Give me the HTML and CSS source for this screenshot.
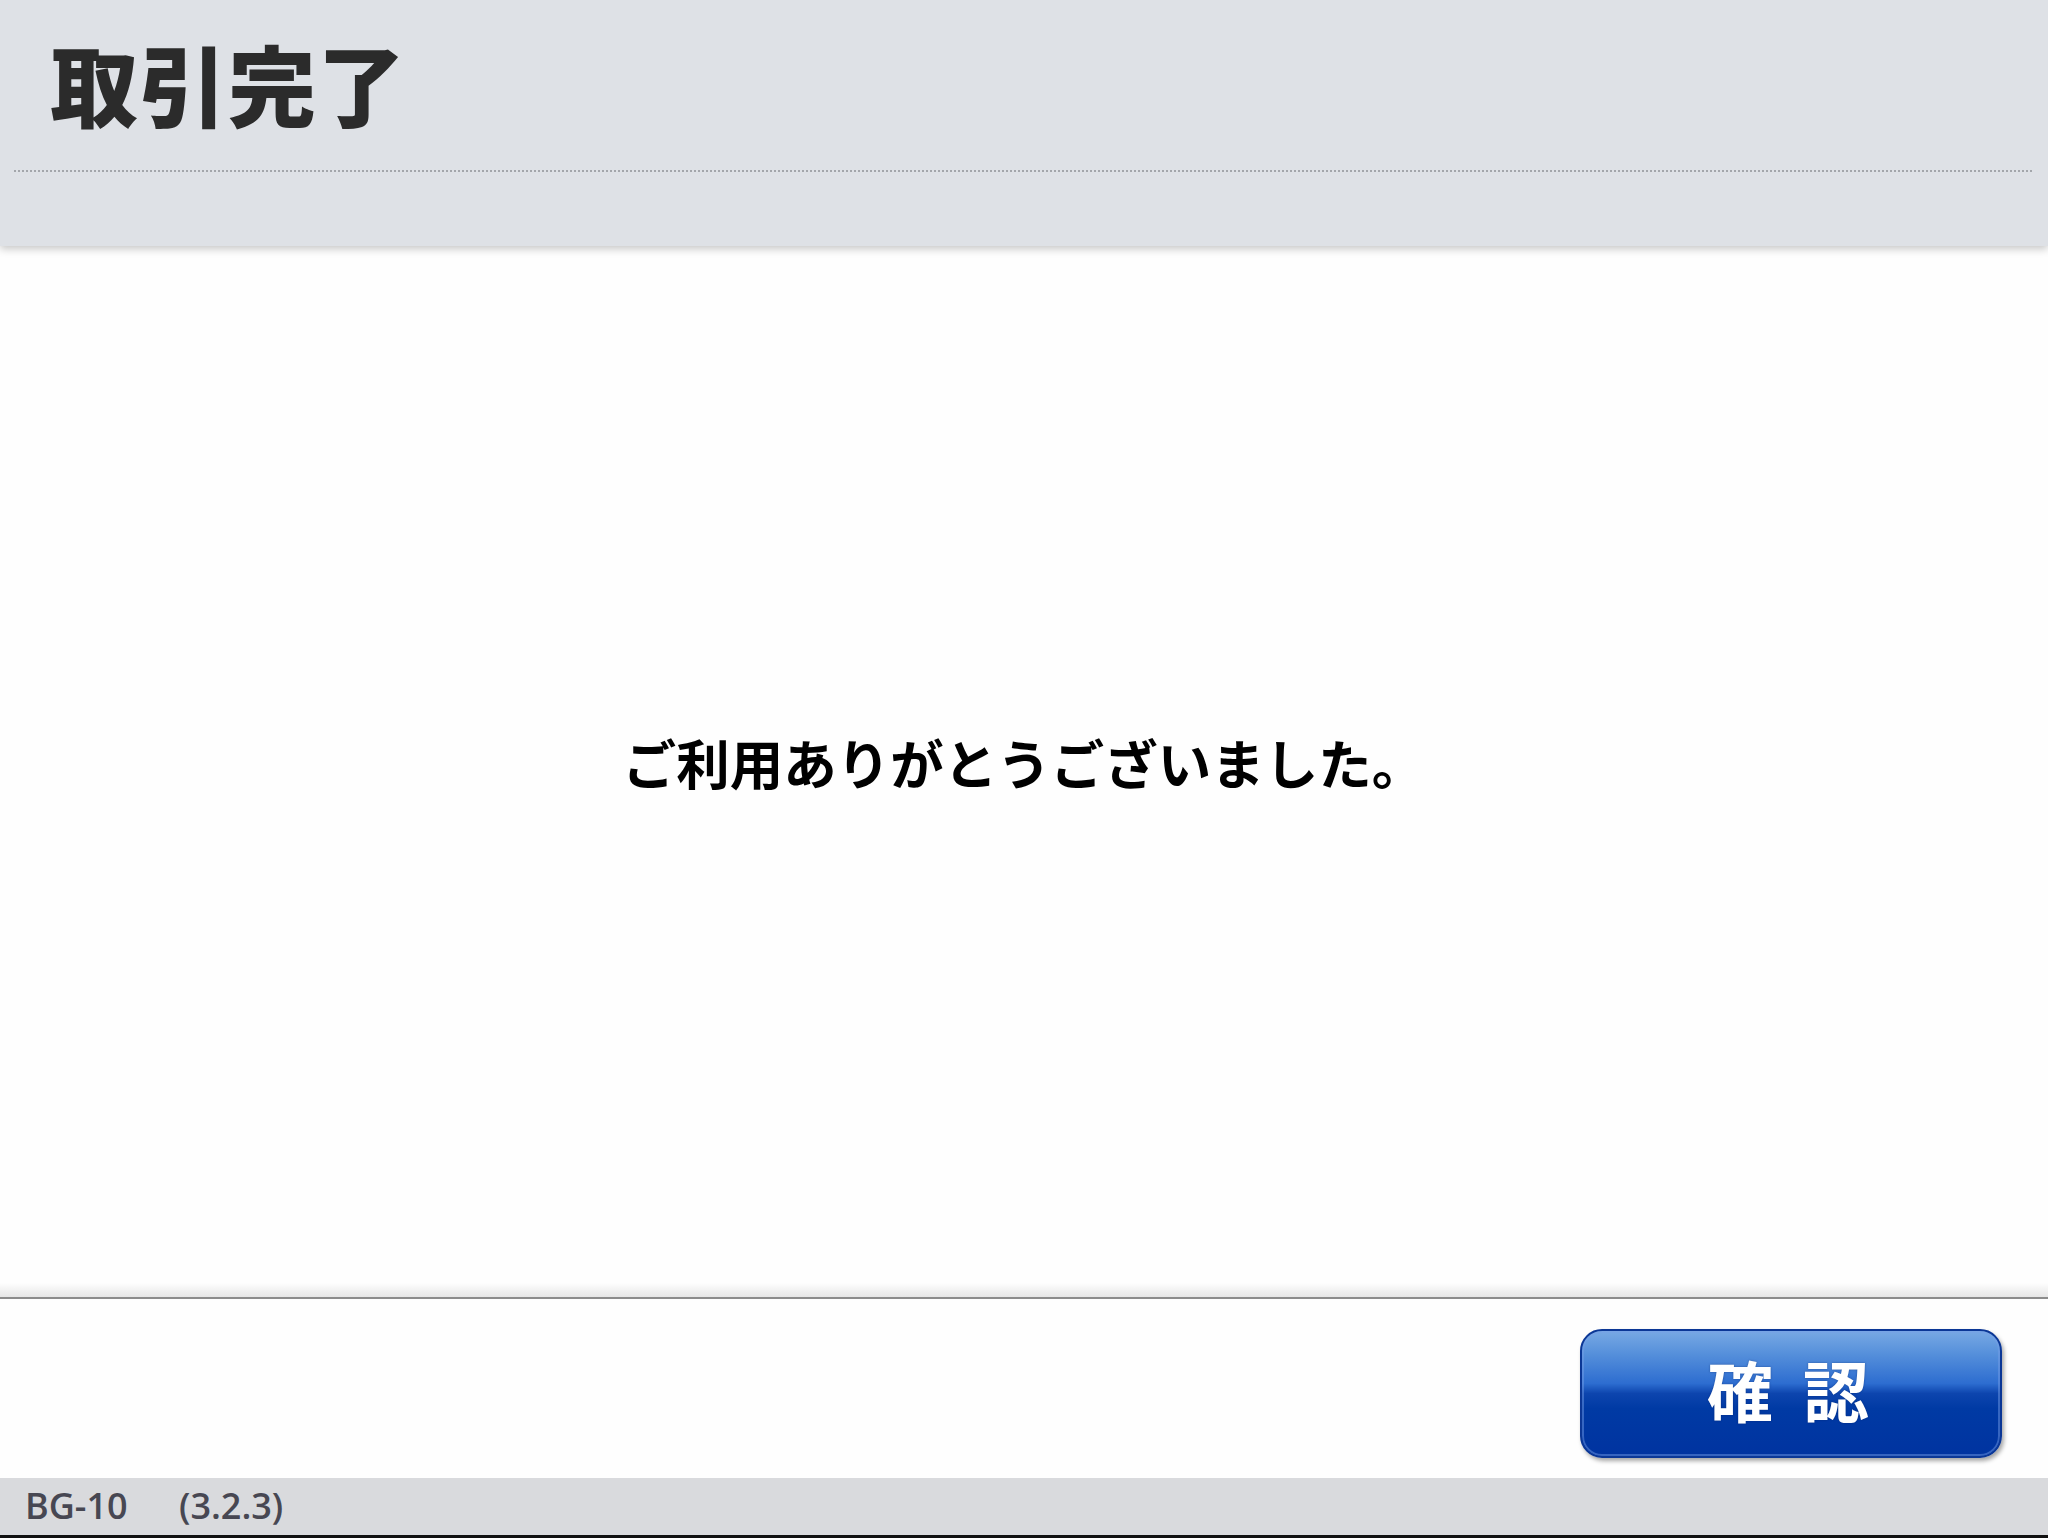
FILE: index.html
```html
<!DOCTYPE html>
<html lang="ja">
<head>
  <meta charset="UTF-8">
  <title>取引完了</title>
  <link rel="stylesheet" href="styles.css">
</head>
<body>
  <div class="screen">
    <header class="title-bar">
      <h1>取引完了</h1>
      <div class="rule"></div>
    </header>

    <main class="message">
      <p>ご利用ありがとうございました。</p>
    </main>

    <!-- Action area with confirm button -->
    <div class="actions">
      <button class="btn-confirm">確認</button>
    </div>

    <footer class="status-bar">
      <span>BG-10</span>
      <span class="version">(3.2.3)</span>
    </footer>
  </div>
</body>
</html>
```

FILE: styles.css
```css
/* General styles */
html, body {
  margin: 0;
  padding: 0;
  background: #fefefe;
}

.screen {
  display: flex;
  flex-direction: column;
  height: 1538px;
  font-family: "Noto Sans CJK JP", "Noto Sans", sans-serif;
}

/* Title bar */
.title-bar {
  height: 246px;
  background-color: #dee1e6;
  box-shadow: 0 3px 8px rgba(0, 0, 0, 0.22);
  position: relative;
  z-index: 1;
  padding: 0 16px 0 14px;
  box-sizing: border-box;
}

.title-bar h1 {
  margin: 0;
  padding: 26px 0 0 36px;
  height: 144px;
  box-sizing: border-box;
  font-size: 88px;
  line-height: 112px;
  font-weight: 900;
  color: #2b2b2b;
  letter-spacing: 1px;
}

.rule {
  margin-top: 26px;
  height: 2px;
  background-image: linear-gradient(to right, #a3a6ab 50%, transparent 50%);
  background-size: 4px 2px;
}

/* Message area */
.message {
  flex: 1;
  display: flex;
  align-items: center;
  justify-content: center;
  padding-bottom: 20px;
  background: linear-gradient(to bottom, #fefefe calc(100% - 14px), #e6e6e6);
  border-bottom: 2px solid #8c8c8c;
}

.message p {
  margin: 0;
  font-size: 53.5px;
  font-weight: 700;
  color: #000;
}

/* Button row */
.actions {
  height: 179px;
  display: flex;
  justify-content: flex-end;
  align-items: flex-start;
  padding: 30px 46px 0 0;
  box-sizing: border-box;
  background: #fefefe;
}

.btn-confirm {
  width: 422px;
  height: 129px;
  border: 2px solid #0b3796;
  border-radius: 22px;
  background: linear-gradient(to bottom,
    #78a9e4 0%,
    #5690db 18%,
    #2d6dd0 42%,
    #0d45ae 50%,
    #003aa4 62%,
    #0033a0 100%);
  box-shadow: inset 0 0 0 2px rgba(120, 160, 230, 0.45), 2px 3px 4px rgba(0, 0, 0, 0.35);
  color: #fff;
  font-family: "Noto Sans CJK JP", sans-serif;
  font-size: 66px;
  font-weight: 700;
  letter-spacing: 30px;
  padding: 0 0 12px 24px;
  text-shadow: 0 0 2px rgba(0, 30, 90, 0.5);
}

/* Status bar */
.status-bar {
  height: 60px;
  background: #d9dadd;
  border-bottom: 3px solid #111;
  box-sizing: border-box;
  padding: 0 0 0 25px;
  font-family: "Open Sans", "Liberation Sans", sans-serif;
  font-size: 36px;
  font-weight: 600;
  line-height: 56px;
  color: #474752;
}

.version {
  margin-left: 42px;
}
```
